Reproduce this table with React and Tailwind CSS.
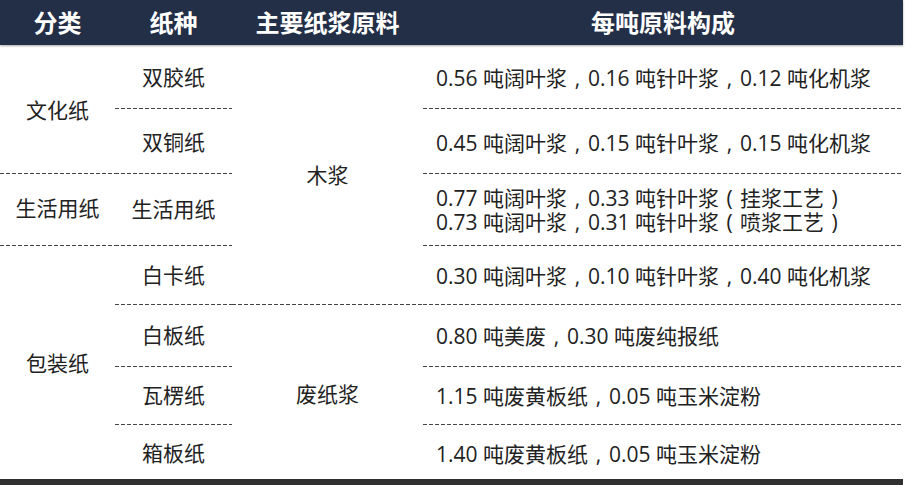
import React from 'react';

const font = { fontFamily: '"Open Sans", "Noto Sans CJK SC", sans-serif' };

// dashed rule drawn on top edge of a cell (hyphen-like dashes)
const dash =
  'bg-[repeating-linear-gradient(90deg,#444_0px,#444_4px,transparent_4px,transparent_6px)] bg-[length:100%_1px] bg-no-repeat bg-top';

// full-width punctuation with the mark centred in its box
const P = ({ c }) => <span className="inline-block w-[1em] text-center">{c}</span>;

const Line = ({ parts }) => (
  <div className="whitespace-nowrap leading-[24px]">
    {parts.map((p, i) =>
      p === ',' || p === '(' || p === ')' ? (
        <P key={i} c={p} />
      ) : (
        <span key={i} className="inline-block">
          {p}
        </span>
      )
    )}
  </div>
);

const App = () => {
  return (
    <div className="w-[906px] h-[485px] bg-white text-[#222]" style={font}>
      <div className="w-[903px]">
        {/* header */}
        <div className="grid grid-cols-[115px_117px_191px_480px] h-[45px] bg-[#232e47] text-white font-bold text-[24px] shadow-[0_1px_2px_rgba(0,0,0,0.35)]">
          <div className="flex items-center justify-center">分类</div>
          <div className="flex items-center justify-center">纸种</div>
          <div className="flex items-center justify-center">主要纸浆原料</div>
          <div className="flex items-center justify-center">每吨原料构成</div>
        </div>

        {/* body */}
        <div className="grid grid-cols-[115px_117px_191px_480px] grid-rows-[63px_65px_72px_59px_62px_58px_55px] text-[21px]">
          {/* column 1 */}
          <div className="col-start-1 row-start-1 row-span-2 flex items-center justify-center pt-[4px]">文化纸</div>
          <div className={`col-start-1 row-start-3 flex items-center justify-center ${dash}`}>生活用纸</div>
          <div className={`col-start-1 row-start-4 row-span-4 flex items-center justify-center pt-[4px] ${dash}`}>包装纸</div>

          {/* column 2 */}
          <div className="col-start-2 row-start-1 flex items-center justify-center pt-[2px]">双胶纸</div>
          <div className={`col-start-2 row-start-2 flex items-center justify-center pt-[4px] ${dash}`}>双铜纸</div>
          <div className={`col-start-2 row-start-3 flex items-center justify-center pt-[2px] ${dash}`}>生活用纸</div>
          <div className={`col-start-2 row-start-4 flex items-center justify-center pt-[3px] ${dash}`}>白卡纸</div>
          <div className={`col-start-2 row-start-5 flex items-center justify-center pt-[2px] ${dash}`}>白板纸</div>
          <div className={`col-start-2 row-start-6 flex items-center justify-center pt-[2px] ${dash}`}>瓦楞纸</div>
          <div className={`col-start-2 row-start-7 flex items-center justify-center pt-[4px] ${dash}`}>箱板纸</div>

          {/* column 3 */}
          <div className="col-start-3 row-start-1 row-span-4 flex items-center justify-center pt-[2px]">木浆</div>
          <div className={`col-start-3 row-start-5 row-span-3 flex items-center justify-center pt-[6px] ${dash}`}>废纸浆</div>

          {/* column 4 */}
          <div className="col-start-4 row-start-1 flex items-center pl-[13px] pt-[2px]">
            <Line parts={['0.56 吨阔叶浆', ',', '0.16 吨针叶浆', ',', '0.12 吨化机浆']} />
          </div>
          <div className={`col-start-4 row-start-2 flex items-center pl-[13px] pt-[4px] ${dash}`}>
            <Line parts={['0.45 吨阔叶浆', ',', '0.15 吨针叶浆', ',', '0.15 吨化机浆']} />
          </div>
          <div className={`col-start-4 row-start-3 flex flex-col justify-center pl-[13px] pt-[2px] ${dash}`}>
            <Line parts={['0.77 吨阔叶浆', ',', '0.33 吨针叶浆', '(', '挂浆工艺', ')']} />
            <Line parts={['0.73 吨阔叶浆', ',', '0.31 吨针叶浆', '(', '喷浆工艺', ')']} />
          </div>
          <div className={`col-start-4 row-start-4 flex items-center pl-[13px] pt-[3px] ${dash}`}>
            <Line parts={['0.30 吨阔叶浆', ',', '0.10 吨针叶浆', ',', '0.40 吨化机浆']} />
          </div>
          <div className={`col-start-4 row-start-5 flex items-center pl-[13px] pt-[2px] ${dash}`}>
            <Line parts={['0.80 吨美废', ',', '0.30 吨废纯报纸']} />
          </div>
          <div className={`col-start-4 row-start-6 flex items-center pl-[13px] pt-[2px] ${dash}`}>
            <Line parts={['1.15 吨废黄板纸', ',', '0.05 吨玉米淀粉']} />
          </div>
          <div className={`col-start-4 row-start-7 flex items-center pl-[13px] pt-[4px] ${dash}`}>
            <Line parts={['1.40 吨废黄板纸', ',', '0.05 吨玉米淀粉']} />
          </div>
        </div>

        {/* bottom rule */}
        <div className="h-[6px] bg-[#303030]" />
      </div>
    </div>
  );
};

export default App;
